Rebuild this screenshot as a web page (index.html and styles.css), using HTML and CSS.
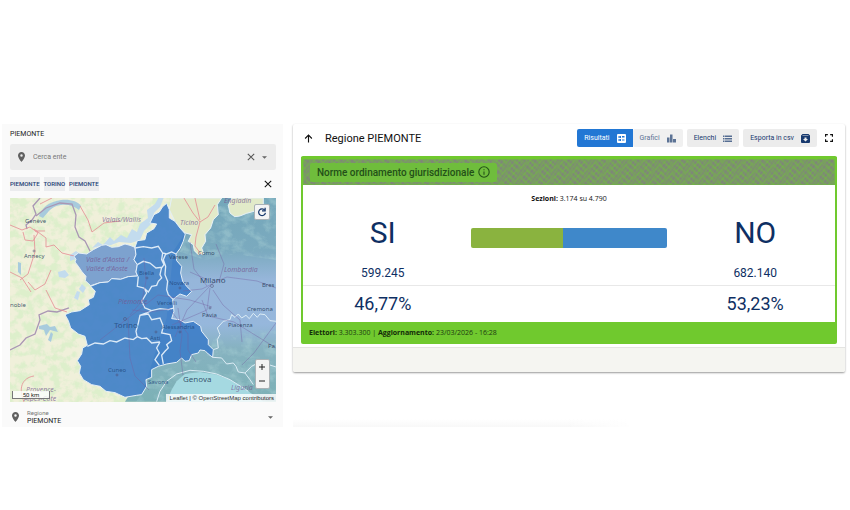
FILE: index.html
```
<!DOCTYPE html>
<html lang="it">
<head>
    <meta charset="utf-8">
    <meta name="viewport" content="width=device-width, initial-scale=1">
    <title>Regione PIEMONTE</title>
    <link rel="stylesheet" href="styles.css">
</head>
<body>
    <div class="page">
        <aside class="sidebar">
            <h2 class="sidebar-title">PIEMONTE</h2>

            <div class="search">
                <svg class="pin" viewBox="5 2 14 20"><path d="M12 2C8.1 2 5 5.100 5 9c0 5.200 7 13 7 13s7-7.800 7-13c0-3.900-3.100-7-7-7zm0 9.500a2.500 2.500 0 1 1 0-5 2.500 2.500 0 0 1 0 5z"/></svg>
                <input class="search-input" type="text" placeholder="Cerca ente" aria-label="Cerca ente">
                <button class="icon-button" aria-label="Cancella"><svg class="cross" viewBox="0 0 10 10"><path d="M1 1l8 8M9 1L1 9"/></svg></button>
                <button class="icon-button" aria-label="Apri elenco"><svg class="caret" viewBox="0 0 10 5"><path d="M0 0h10L5 5z"/></svg></button>
            </div>

            <nav class="crumbs">
                <a class="crumb" href="#">PIEMONTE</a>
                <a class="crumb" href="#">TORINO</a>
                <a class="crumb" href="#">PIEMONTE</a>
                <button class="icon-button crumbs-close" aria-label="Chiudi"><svg class="cross" viewBox="0 0 10 10"><path d="M1 1l8 8M9 1L1 9"/></svg></button>
            </nav>

            <div class="map">
                <svg class="map-canvas" viewBox="0 0 266 204">
                    <defs>
                        <filter id="terrain" x="0" y="0" width="100%" height="100%">
                            <feTurbulence type="fractalNoise" baseFrequency="0.12" numOctaves="4" seed="8"/>
                            <feColorMatrix values="0 0 0 0 0.72  0 0 0 0 0.86  0 0 0 0 0.6  4 0 0 0 -1.6"/>
                        </filter>
                        <filter id="relief" x="0" y="0" width="100%" height="100%">
                            <feTurbulence type="fractalNoise" baseFrequency="0.09 0.12" numOctaves="4" seed="3"/>
                            <feColorMatrix values="0 0 0 0 0.38  0 0 0 0 0.62  0 0 0 0 0.66  3 0 0 0 -1.3"/>
                        </filter>
                        <linearGradient id="plain" x1="0" y1="0" x2="0" y2="1">
                            <stop offset="0" stop-color="#74a7ba"/>
                            <stop offset="0.26" stop-color="#7baabf"/>
                            <stop offset="0.4" stop-color="#96b6da"/>
                            <stop offset="0.62" stop-color="#96b7dc"/>
                            <stop offset="0.74" stop-color="#86b2c0"/>
                            <stop offset="1" stop-color="#7cb1b6"/>
                        </linearGradient>
                        <clipPath id="hills">
                            <path d="M176 0h90v62l-40-6-30 6-26-8 8-20z M204 140l62-10v74H126l20-30 50-14z"/>
                        </clipPath>
                    </defs>

                    <rect class="land" width="266" height="204"/>
                    <rect width="266" height="204" filter="url(#terrain)"/>

                    <!-- snow and lakes -->
                    <g class="snow">
                        <path d="M82 50l6-6 5 3 7-8 4 4 7-6 6 3 5-9 5 3 3-8 8-6-1-8 8-6 5-9 4 2-4 10-6 6-2 10-8 8-4 9-9 3-12-1-8 3-11 1z"/>
                        <path d="M60 57l6-4 4 3-4 5-6 2zM48 74l7-2 4 5-4 3-6-1zM72 86l4 4-3 5-4-4zM64 100l3-7 3 1-2 8z"/>
                    </g>
                    <path class="lake" d="M29 18c3-8 9-14 22-16 8-1 17 1 20 6l-2 4c-5-4-11-6-18-5-9 1-12 6-18 13zM8 64l3 1 0 12-3-3zM29 128l8-2 3 3 5-1 3 6-8-2-4 6-2-6-5-1zM38 142l3-8 2 2-2 8z"/>

                    <!-- national borders -->
                    <path class="border" d="M30 0l-7 8 3 8-4 6-6 5 1 4M26 18l10-8 14-5 12 1 4 11-1 12 4 10 6 4 6 12M0 152l10-5 6-7 9-4 5-14-1-5 9-4 9 1 12-4"/>

                    <!-- roads on the french side -->
                    <path class="road" d="M0 27l12 5 8-3 8 6-5 8-8-1-2-8M24 37l1 17-7 22-8 6M18 84l7 8 10-6 6-14M36 92l9 18 12 4M0 74l12 6 9 14M24 31l12 9 0 9 8-2 8 8 12 3M35 33l-10 0M70 8l8 14 4 12 12-9 16-2M42 0l-12 6M24 178c-12 2-16 12-10 26"/>

                    <!-- outlines of the regions are drawn on a grid three times finer -->
                    <g transform="translate(-10 -80) scale(0.33333)">
                        <path class="region-far" fill="url(#plain)" d="M556 345L575 350 565 370 580 380 583 398 595 410 612 408 605 390 617 370 615 350 632 330 640 305 655 290 652 260 665 240 696 240 685 262 690 285 704 296 720 294 740 286 762 280 790 290 790 240 828 240 828 851H375L385 835 425 830 500 600 520 400z"/>
                    </g>
                    <g clip-path="url(#hills)"><rect class="hill-fill" width="266" height="204" filter="url(#relief)"/></g>
                    <g transform="translate(-10 -80) scale(0.33333)">
                        <path class="swiss" d="M556 345L575 350 565 370 580 380 583 398 595 410 612 408 605 390 617 370 615 350 632 330 640 305 655 290 652 260 665 240H515L508 275 525 310 540 330zM696 240L685 262 690 285 704 296 720 294 740 286 762 280 790 290 790 240z"/>
                        <path class="sea" d="M500 851L515 815 530 790 555 768 600 762 650 770 690 785 730 810 760 830 790 851z"/>
                        <path class="coast" d="M470 851L480 820 500 790 530 768 570 757 610 760 650 768 690 785 730 810 745 820"/>
                        <path class="region-line" d="M640 695L655 690 652 665 660 650 652 630 670 610 690 605 695 590 705 598 715 588 725 600 738 592 748 602 760 586 772 598 780 588 795 590 810 608 828 610M638 718L665 720 680 738 700 735 708 745 715 762 735 765 755 745 780 732 800 738 828 747M735 765L750 785 760 800"/>
                        <path class="region-aosta" d="M405 388L390 382 375 378 355 386 335 388 318 380 305 382 280 395 260 408 235 405 222 415 228 424 225 432 235 445 245 460 258 475 256 488 272 503 300 494 325 492 335 482 362 484 385 476 413 474 408 462 412 440 402 425 408 410z"/>
                        <path class="region" d="M500 256L488 266 478 282 462 290 450 315 470 318 462 332 440 345 435 365 412 368 405 388 408 410 402 425 412 440 408 462 413 474 385 476 362 484 335 482 325 492 300 494 272 505 286 520 280 538 265 545 268 560 240 578 215 582 195 590 205 608 212 630 235 648 255 655 262 682 248 690 245 708 232 728 242 745 238 765 250 785 275 800 300 805 318 820 345 824 375 838 410 832 425 830 440 805 438 785 455 778 455 755 475 745 500 738 530 733 545 720 555 730 568 728 575 710 595 705 600 696 615 698 625 708 638 718 640 695 625 680 625 665 605 640 602 625 580 610 555 615 538 605 515 602 522 580 518 545 540 528 560 535 575 520 560 505 548 490 542 465 545 445 530 428 528 408 540 392 550 370 556 348 540 330 525 310 508 300 508 275z"/>
                        <path class="province" d="M405 390L430 386 455 390 475 385 488 405 500 408 515 402 528 408M497 408L490 425 497 445 495 470 503 490 500 515 505 530 520 545M412 440L430 430 450 435 468 450 485 448 480 470 485 480 475 490 470 502 455 505 445 522 432 510 412 505 415 475M488 405L485 425 492 440 485 450M432 510L440 525 425 550 435 570 455 578 480 572 505 575 522 570M455 578L440 585 420 592 415 615 408 640 412 658M262 685L285 675 310 678 330 668 350 672 375 660 400 665 412 656 425 662 440 660 455 675 480 672M420 592L445 588 455 605 480 600 490 625 485 645 510 650 515 668 500 680 505 690 495 700 485 712 490 738M480 672L470 690 478 705 465 725 478 742"/>
                    </g>

                    <path class="road-dark" d="M90 142l18-14 10-8 12-9 18-14 32 5 22 7M118 120l2 40 5 18 14 14M122 112l18 2 20-3 18 25 0 16 8 12M134 60l2 23-4 20-12 14M168 110l4 27-2 16 3 24M173 93l19-2 12-6M200 88l-23 24-12 27M203 92l10 15 17 15 2 22M197 88l-13-17-4-27M180 74l18 8M200 90l-3 22-35 15M192 102l6 16 26 6 42 26M205 84l12-5 30 4 19 7M209 84l5-18-8-20M266 125l-22 30-12 12"/>
                    <path class="road" d="M174 0l9 15 7 9-4 15-1 9 6 8M190 24l8-5 7-12M190 22l-5-22"/>

                    <g class="town">
                        <text x="15" y="25">Genève</text>
                        <text x="14" y="60">Annecy</text>
                        <text x="0" y="109">noble</text>
                        <text x="188" y="57">Como</text>
                        <text x="159" y="61">Varese</text>
                        <text x="252" y="89">Bres</text>
                        <text x="192" y="119">Pavia</text>
                        <text x="237" y="113">Cremona</text>
                        <text x="218" y="129">Piacenza</text>
                        <text x="258" y="150">Pa</text>
                    </g>
                    <g class="town local">
                        <text x="129" y="77">Biella</text>
                        <text x="159" y="87">Novara</text>
                        <text x="147" y="107">Vercelli</text>
                        <text x="152" y="131">Alessandria</text>
                        <text x="140" y="142">Asti</text>
                        <text x="98" y="174">Cuneo</text>
                        <text x="138" y="186">Savona</text>
                    </g>
                    <g class="city">
                        <text class="local" x="104" y="130">Torino</text>
                        <text x="190" y="85">Milano</text>
                        <text x="173" y="184">Genova</text>
                    </g>
                    <g class="area">
                        <text x="92" y="24">Valais/Wallis</text>
                        <text x="170" y="27">Ticino</text>
                        <text x="214" y="5">Engiadin</text>
                        <text x="76" y="64">Valle d'Aosta /</text>
                        <text x="76" y="73">Vallée d'Aoste</text>
                        <text x="214" y="74">Lombardia</text>
                        <text x="108" y="106">Piemonte</text>
                        <text x="221" y="192">Liguria</text>
                        <text x="16" y="194">Provence-</text>
                        <text x="14" y="203">Alpes-Côte</text>
                    </g>
                    <g class="dots">
                        <circle cx="24" cy="53" r="1"/><circle cx="115" cy="121" r="1.500"/><circle cx="202" cy="88" r="1.500"/><circle cx="107" cy="177" r="1"/><circle cx="200" cy="110" r="1"/><circle cx="170" cy="90" r="1"/><circle cx="146" cy="134" r="1"/><circle cx="137" cy="80" r="1"/><circle cx="170" cy="134" r="1"/>
                    </g>
                </svg>
                <button class="map-refresh" aria-label="Aggiorna mappa">
                    <svg viewBox="0 0 16 16"><path d="M12.500 5A5.500 5.500 0 1 0 13.500 9.500"/><path d="M13 1v5H8"/></svg>
                </button>
                <div class="map-zoom">
                    <button aria-label="Ingrandisci"><svg viewBox="0 0 8 8"><path d="M1 4h6M4 1v6"/></svg></button>
                    <button aria-label="Riduci"><svg viewBox="0 0 8 8"><path d="M1 4h6"/></svg></button>
                </div>
                <div class="map-scale">50 km</div>
                <div class="map-credits"><a href="#">Leaflet</a> | © <a href="#">OpenStreetMap</a> contributors</div>
            </div>

            <div class="region-field">
                <svg class="pin" viewBox="5 2 14 20"><path d="M12 2C8.1 2 5 5.100 5 9c0 5.200 7 13 7 13s7-7.800 7-13c0-3.900-3.100-7-7-7zm0 9.500a2.500 2.500 0 1 1 0-5 2.500 2.500 0 0 1 0 5z"/></svg>
                <div class="region-text">
                    <label for="regione">Regione</label>
                    <select id="regione"><option>PIEMONTE</option></select>
                </div>
                <svg class="caret" viewBox="0 0 10 5"><path d="M0 0h10L5 5z"/></svg>
            </div>
        </aside>

        <main class="content">
            <section class="card">
                <header class="card-header">
                    <button class="icon-button" aria-label="Livello superiore"><svg class="arrow-up" viewBox="0 0 16 16"><path d="M8 15V2M2 8l6-6 6 6"/></svg></button>
                    <h1 class="card-title">Regione PIEMONTE</h1>
                    <div class="actions">
                        <div class="tabs">
                            <button class="action active">Risultati
                                <svg viewBox="0 0 18 18"><path fill-rule="evenodd" d="M2 0h14a2 2 0 0 1 2 2v14a2 2 0 0 1-2 2H2a2 2 0 0 1-2-2V2a2 2 0 0 1 2-2zM3 4v4h5V4zM3 10v4h5v-4zM10 4v2h5V4zM10 7v1h5V7zM10 11v2h5v-2zM5 5h1v2H5zM5 11h1v2H5z"/></svg>
                            </button>
                            <button class="action muted">Grafici
                                <svg viewBox="0 0 18 18"><path d="M0 7h5v10H0zM6 1h5v16H6zM12 10h6v7h-6z"/></svg>
                            </button>
                        </div>
                        <button class="action">Elenchi
                            <svg viewBox="0 0 18 18"><path opacity=".7" d="M0 3h3v3H0zM0 8h3v3H0zM0 13h3v3H0zM4 3h14v3H4zM4 8h14v3H4zM4 13h14v3H4z"/></svg>
                        </button>
                        <button class="action">Esporta in csv
                            <svg viewBox="0 0 18 18"><path fill-rule="evenodd" d="M3 0h12l3 3v13a2 2 0 0 1-2 2H2a2 2 0 0 1-2-2V3zM3 2v1h12V2zM9 15l5-5h-3V7H7v3H4z"/></svg>
                        </button>
                        <button class="icon-button" aria-label="Schermo intero"><svg class="fullscreen" viewBox="0 0 14 14"><path d="M1 5V1h4M9 1h4v4M13 9v4H9M5 13H1V9"/></svg></button>
                    </div>
                </header>

                <div class="panel">
                    <div class="panel-banner">
                        <svg class="hatch" aria-hidden="true">
                            <defs>
                                <pattern id="weave" width="3" height="5" patternUnits="userSpaceOnUse" patternTransform="rotate(35)"><path d="M0 1h3M1 0v5"/></pattern>
                                <pattern id="weave2" width="7" height="9" patternUnits="userSpaceOnUse" patternTransform="rotate(52)"><path d="M0 1h7M0 5h7M1 0v9"/></pattern>
                            </defs>
                            <rect width="100%" height="100%" fill="url(#weave)"/>
                            <rect width="100%" height="100%" fill="url(#weave2)"/>
                        </svg>
                        <div class="badge">
                            <span>Norme ordinamento giurisdizionale</span>
                            <svg class="info" viewBox="0 0 22 22"><circle cx="11" cy="11" r="9.500"/><path d="M11 10v6M11 6v2"/></svg>
                        </div>
                    </div>

                    <p class="sections"><b>Sezioni:</b> 3.174 su 4.790</p>

                    <div class="results">
                        <div class="answer">SI</div>
                        <div class="bar">
                            <div class="bar-yes" style="width: 46.77%"></div>
                            <div class="bar-no" style="width: 53.23%"></div>
                        </div>
                        <div class="answer">NO</div>
                    </div>
                    <div class="results votes">
                        <div>599.245</div>
                        <div></div>
                        <div>682.140</div>
                    </div>
                    <div class="results percent">
                        <div>46,77%</div>
                        <div></div>
                        <div>53,23%</div>
                    </div>

                    <div class="panel-footer"><b>Elettori:</b> 3.303.300 | <b>Aggiornamento:</b> 23/03/2026 - 16:28</div>
                </div>

                <footer class="card-footer"></footer>
            </section>
            <div class="fade"></div>
        </main>
    </div>
</body>
</html>
```
FILE: styles.css
```
* {
    box-sizing: border-box;
}

body {
    margin: 0;
    background-color: #fff;
    color: #222;
    font-family: Roboto, "Liberation Sans", sans-serif;
    font-size: 7px;
}

h1, h2, p {
    margin: 0;
    font-weight: 400;
}

button {
    font-family: inherit;
    border: none;
    cursor: pointer;
}

a {
    text-decoration: none;
}

svg {
    display: block;
}

.page {
    display: grid;
    grid-template-columns: 33.33% 1fr;
    gap: 10px;
    padding: 124px 5px 0 2px;
}

/* Sidebar */
.sidebar {
    background-color: #fafafa;
    padding: 0 7px 0 8px;
}

.sidebar-title {
    font-size: 7px;
    line-height: 20px;
}

.search {
    display: flex;
    align-items: center;
    height: 26px;
    padding: 0 5px 0 8px;
    background-color: #ececec;
    border-radius: 2px;
}

.pin {
    width: 7px;
    height: 10px;
    fill: #606060;
}

.search-input {
    flex: 1;
    min-width: 0;
    margin-left: 8px;
    padding: 0;
    border: none;
    outline: none;
    background: none;
    font-family: inherit;
    font-size: 7px;
}

.search-input::placeholder {
    color: #777;
}

.icon-button {
    display: flex;
    align-items: center;
    justify-content: center;
    padding: 0;
    background: none;
}

.search .icon-button {
    width: 13px;
    height: 16px;
}

.cross {
    width: 8px;
    height: 8px;
    fill: none;
    stroke: #555;
    stroke-width: 1.3;
}

.caret {
    width: 5px;
    height: 3px;
    fill: #666;
}

.crumbs {
    display: flex;
    align-items: center;
    gap: 4px;
    height: 28px;
}

.crumb {
    padding: 2px 0;
    line-height: 10px;
    font-size: 6px;
    font-weight: 500;
    color: #1d4175;
    background-color: #ebecee;
}

.crumbs-close {
    width: 16px;
    height: 16px;
    margin-left: auto;
}

.crumbs-close .cross {
    stroke: #111;
}

/* Map */
.map {
    position: relative;
    overflow: hidden;
}

.map-canvas {
    width: 100%;
    font-family: "Noto Sans", sans-serif;
}

.land {
    fill: #f0f0da;
}

.snow {
    fill: #c3dcee;
}

.lake {
    fill: #a8cbdd;
}

.border {
    fill: none;
    stroke: #a996b4;
    stroke-width: 1.3;
}

.road, .road-dark {
    fill: none;
    stroke: #e58c93;
    stroke-width: 0.8;
}

.road-dark {
    stroke: #74609f;
    opacity: 0.5;
}

.hill-fill {
    opacity: 0.5;
}

.swiss {
    fill: #e2eac9;
    stroke: #e4eff8;
    stroke-width: 3;
}

.sea {
    fill: #a5d9e1;
}

.coast, .region-line {
    fill: none;
    stroke: #dcecf5;
    stroke-width: 3;
}

.region-aosta {
    fill: #7da2cf;
    stroke: #e4eff8;
    stroke-width: 3;
}

.region {
    fill: #3d7dc8;
    fill-opacity: 0.9;
    stroke: #e4eff8;
    stroke-width: 3;
}

.province {
    fill: none;
    stroke: #dceaf7;
    stroke-width: 4;
}

.town, .city {
    font-size: 6px;
    fill: #263b58;
    fill-opacity: 0.85;
}

.city {
    font-size: 8px;
}

.local {
    fill: #23497f;
}

.area {
    font-size: 7px;
    font-style: italic;
    fill: #75568f;
    fill-opacity: 0.75;
}

.dots {
    fill: none;
    stroke: #4d4b70;
    stroke-width: 0.5;
}

.map-refresh, .map-zoom {
    position: absolute;
    right: 6px;
    background-color: #f4f4f4;
    border: 1px solid #aab2b6;
    border-radius: 2px;
}

.map-refresh {
    top: 6px;
    width: 16px;
    height: 16px;
    padding: 2px;
}

.map-refresh svg {
    width: 10px;
    height: 10px;
    fill: none;
    stroke: #16366b;
    stroke-width: 2;
}

.map-zoom {
    bottom: 13px;
    width: 15px;
}

.map-zoom button {
    display: flex;
    align-items: center;
    justify-content: center;
    width: 13px;
    height: 14px;
    padding: 0;
    background: none;
}

.map-zoom svg {
    width: 8px;
    height: 8px;
    fill: none;
    stroke: #222;
    stroke-width: 1;
}

.map-scale {
    position: absolute;
    left: 2px;
    bottom: 3px;
    width: 38px;
    border: 1px solid #777;
    border-top: none;
    background-color: rgba(255, 255, 255, 0.8);
    font-size: 6px;
    line-height: 7px;
    text-align: center;
}

.map-credits {
    position: absolute;
    right: 0;
    bottom: 0;
    padding: 0 2px 0 4px;
    background-color: rgba(255, 255, 255, 0.8);
    font-family: "Liberation Sans", sans-serif;
    font-size: 6px;
    line-height: 8px;
}

.map-credits a {
    color: #333;
}

/* Region select */
.region-field {
    display: flex;
    align-items: center;
    height: 25px;
    padding: 6px 3px 0 2px;
}

.region-text {
    flex: 1;
    display: flex;
    flex-direction: column;
    margin-left: 8px;
}

.region-text label {
    font-size: 6px;
    line-height: 8px;
    color: #777;
}

.region-text select {
    appearance: none;
    padding: 0;
    border: none;
    background: none;
    color: #222;
    font-family: inherit;
    font-size: 7px;
    line-height: 9px;
}

/* Results card */
.content {
    display: flex;
    flex-direction: column;
    justify-content: space-between;
}

.card {
    border-radius: 2px;
    box-shadow: 0 1px 2px rgba(0, 0, 0, 0.4);
    overflow: hidden;
}

.card-header {
    display: flex;
    align-items: center;
    height: 28px;
    padding: 0 8px;
}

.card-header .icon-button {
    width: 16px;
    height: 16px;
}

.arrow-up {
    width: 9px;
    height: 9px;
    fill: none;
    stroke: #111;
    stroke-width: 2;
}

.card-title {
    margin-left: 8px;
    font-size: 11px;
    color: #111;
}

.actions {
    display: flex;
    align-items: center;
    gap: 4px;
    margin-left: auto;
}

.tabs {
    display: flex;
}

.action {
    display: flex;
    align-items: center;
    gap: 7px;
    height: 18px;
    padding: 0 7px;
    border-radius: 2px;
    background-color: #ececec;
    color: #17396e;
    font-size: 7px;
}

.action svg {
    width: 9px;
    height: 9px;
    fill: currentColor;
}

.action.active {
    background-color: #2277d4;
    color: #fff;
    border-radius: 2px 0 0 2px;
}

.action.muted {
    background-color: #f0f0f0;
    color: #5c7395;
}

.fullscreen {
    width: 8px;
    height: 8px;
    fill: none;
    stroke: #111;
    stroke-width: 2;
}

.panel {
    margin: 4px 8px 3px;
    border: 2px solid #70c92e;
    border-top-width: 3px;
    border-bottom: none;
    border-radius: 2px;
    overflow: hidden;
}

.panel-banner {
    position: relative;
    display: flex;
    align-items: center;
    height: 26px;
    padding: 0 7px;
    background-color: #808080;
}

.hatch {
    position: absolute;
    inset: 0;
    width: 100%;
    height: 100%;
    stroke: #6fc238;
    stroke-width: 0.5;
}

.badge {
    position: relative;
    display: flex;
    align-items: center;
    gap: 4px;
    height: 19px;
    padding: 0 7px;
    border-radius: 2px;
    background-color: #6fbd3c;
    color: #235018;
    font-size: 10px;
    font-weight: 500;
}

.info {
    width: 12px;
    height: 12px;
    fill: none;
    stroke: #235018;
    stroke-width: 2;
}

.sections, .panel-footer {
    font-family: "Open Sans", sans-serif;
}

.sections {
    line-height: 28px;
    color: #111;
    text-align: center;
}

.results {
    display: grid;
    grid-template-columns: 3fr 4fr 3fr;
    align-items: center;
    text-align: center;
    color: #0e2f63;
}

.answer {
    font-size: 30px;
    line-height: 40px;
}

.bar {
    display: flex;
    height: 20px;
    margin: 14px 8px 4px;
    border-radius: 2px;
    overflow: hidden;
}

.bar-yes {
    background-color: #8ab33f;
}

.bar-no {
    background-color: #3f88ca;
}

.votes {
    padding-top: 8px;
    font-size: 12px;
    line-height: 24px;
    border-bottom: 1px solid #e8e8e8;
}

.percent {
    font-size: 18px;
    line-height: 36px;
}

.panel-footer {
    padding: 0 6px;
    background-color: #70c92e;
    color: #1c3a10;
    line-height: 22px;
}

.panel-footer b {
    color: #122a08;
}

.card-footer {
    height: 25px;
    border-top: 1px solid #e4e4e2;
    background-color: #f5f5f1;
}

.fade {
    width: 62%;
    height: 8px;
    background: linear-gradient(90deg, transparent 80%, #fff), linear-gradient(#fff, #f8f8f8);
}
```
